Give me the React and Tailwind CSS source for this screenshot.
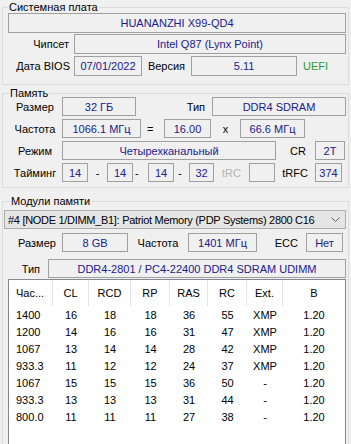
import React from "react";

const timings = [
  ["1400", "16", "18", "18", "36", "55", "XMP", "1.20"],
  ["1200", "14", "16", "16", "31", "47", "XMP", "1.20"],
  ["1067", "13", "14", "14", "28", "42", "XMP", "1.20"],
  ["933.3", "11", "12", "12", "24", "37", "XMP", "1.20"],
  ["1067", "15", "15", "15", "36", "50", "-", "1.20"],
  ["933.3", "13", "13", "13", "31", "44", "-", "1.20"],
  ["800.0", "11", "11", "11", "27", "38", "-", "1.20"],
];

const headers = ["Час...", "CL", "RCD", "RP", "RAS", "RC", "Ext.", "B"];
const colW = ["w-[44px]", "w-[36px]", "w-[42px]", "w-[39px]", "w-[38px]", "w-[39px]", "w-[36px]", "flex-1"];

function Field({ className = "", children }) {
  return (
    <div
      className={`flex h-full shrink-0 items-center justify-center whitespace-nowrap border border-[#a0a0a0] bg-[#f0f0f0] text-[#20208a] ${className}`}
    >
      {children}
    </div>
  );
}

function Label({ className = "", children }) {
  return <div className={`flex h-full shrink-0 items-center whitespace-nowrap ${className}`}>{children}</div>;
}

export default function App() {
  return (
    <div className="h-[444px] w-[351px] overflow-hidden bg-[#f0f0f0] pt-[1px] font-['Liberation_Sans',Arial,sans-serif] text-[11px] leading-[12px] text-black">
      {/* Системная плата */}
      <fieldset className="ml-[2px] w-[347px] border border-[#dcdcdc] pb-[8px] pl-[5px] pr-[2px]">
        <legend className="px-[1px] leading-[12px]">Системная плата</legend>
        <div className="flex h-[20px]">
          <Field className="w-[338px]">HUANANZHI X99-QD4</Field>
        </div>
        <div className="mt-[1px] flex h-[20px]">
          <Label className="w-[66px] justify-end pr-[5px]">Чипсет</Label>
          <Field className="w-[272px]">Intel Q87 (Lynx Point)</Field>
        </div>
        <div className="mt-[2px] flex h-[20px]">
          <Label className="w-[66px] justify-end pr-[4px]">Дата BIOS</Label>
          <Field className="w-[68px]">07/01/2022</Field>
          <Label className="w-[49px] justify-center">Версия</Label>
          <Field className="w-[106px]">5.11</Field>
          <Label className="pl-[6px] text-[#2e9b2e]">UEFI</Label>
        </div>
      </fieldset>

      {/* Память */}
      <fieldset className="ml-[2px] mt-[2px] w-[347px] border border-[#dcdcdc] pb-[5px] pl-[5px] pr-[2px]">
        <legend className="ml-[1px] px-[1px] leading-[12px]">Память</legend>
        <div className="-mt-[2px] flex h-[19px]">
          <Label className="w-[54px] justify-center">Размер</Label>
          <Field className="w-[74px]">32 ГБ</Field>
          <Label className="w-[76px] justify-end pr-[7px]">Тип</Label>
          <Field className="w-[134px]">DDR4 SDRAM</Field>
        </div>
        <div className="mt-[3px] flex h-[19px]">
          <Label className="w-[54px] justify-center">Частота</Label>
          <Field className="w-[79px]">1066.1 МГц</Field>
          <Label className="w-[23px] justify-start pl-[6px]">=</Label>
          <Field className="w-[47px]">16.00</Field>
          <Label className="w-[29px] justify-center">x</Label>
          <Field className="w-[65px]">66.6 МГц</Field>
        </div>
        <div className="mt-[3px] flex h-[19px]">
          <Label className="w-[54px] justify-center">Режим</Label>
          <Field className="w-[214px]">Четырехканальный</Field>
          <Label className="w-[39px] justify-end pr-[9px]">CR</Label>
          <Field className="w-[30px]">2T</Field>
        </div>
        <div className="mt-[3px] flex h-[19px]">
          <Label className="w-[54px] justify-center">Тайминг</Label>
          <Field className="w-[26px]">14</Field>
          <Label className="w-[19px] justify-center">-</Label>
          <Field className="w-[26px]">14</Field>
          <Label className="w-[15px] justify-start pl-[2px]">-</Label>
          <Field className="w-[26px]">14</Field>
          <Label className="w-[15px] justify-start pl-[4px]">-</Label>
          <Field className="w-[25px]">32</Field>
          <Label className="w-[35px] justify-center text-[#b4b4b4]">tRC</Label>
          <Field className="w-[26px]"></Field>
          <Label className="w-[40px] justify-center">tRFC</Label>
          <Field className="w-[27px]">374</Field>
        </div>
      </fieldset>

      {/* Модули памяти */}
      <fieldset className="ml-[2px] mt-[7px] w-[347px] border border-[#dcdcdc] pb-[5px] pl-[5px] pr-[2px]">
        <legend className="ml-[2px] px-[1px] leading-[12px]">Модули памяти</legend>
        <div className="-ml-[4px] mt-[3px] flex h-[19px] w-[342px] items-center justify-between overflow-hidden border border-[#acacac] bg-[#e5e5e5] pl-[3px] pr-[5px]">
          <span className="whitespace-nowrap tracking-[-0.3px]">
            #4 [NODE 1/DIMM_B1]: Patriot Memory (PDP Systems) 2800 C16
          </span>
          <svg width="9" height="6" viewBox="0 0 9 6" className="shrink-0">
            <polyline points="0.5,0.5 4.5,4.5 8.5,0.5" fill="none" stroke="#606060" strokeWidth="1" />
          </svg>
        </div>
        <div className="mt-[4px] flex h-[19px]">
          <Label className="w-[54px] justify-center pl-[4px]">Размер</Label>
          <Field className="w-[66px]">8 GB</Field>
          <Label className="w-[60px] justify-center">Частота</Label>
          <Field className="w-[69px]">1401 МГц</Field>
          <Label className="w-[49px] justify-end pr-[8px]">ECC</Label>
          <Field className="w-[37px]">Нет</Field>
        </div>
        <div className="mt-[7px] flex h-[19px]">
          <Label className="w-[40px] justify-end pr-[8px]">Тип</Label>
          <Field className="w-[298px]">DDR4-2801 / PC4-22400 DDR4 SDRAM UDIMM</Field>
        </div>
        <div className="mt-[1px] h-[230px] w-[338px] border border-[#828790] bg-white">
          <div className="flex h-[26px]">
            {headers.map((h, i) => (
              <div
                key={h}
                className={`flex items-center ${colW[i]} ${i === 0 ? "justify-start pl-[7px]" : "justify-center"} ${
                  i < 7 ? "border-r border-[#e5e5e5]" : ""
                }`}
              >
                {h}
              </div>
            ))}
          </div>
          {timings.map((row, r) => (
            <div key={r} className="flex h-[17px]">
              {row.map((v, i) => (
                <div
                  key={i}
                  className={`flex items-center ${colW[i]} ${i === 0 ? "justify-start pl-[7px]" : "justify-center"}`}
                >
                  {v}
                </div>
              ))}
            </div>
          ))}
        </div>
      </fieldset>
    </div>
  );
}
